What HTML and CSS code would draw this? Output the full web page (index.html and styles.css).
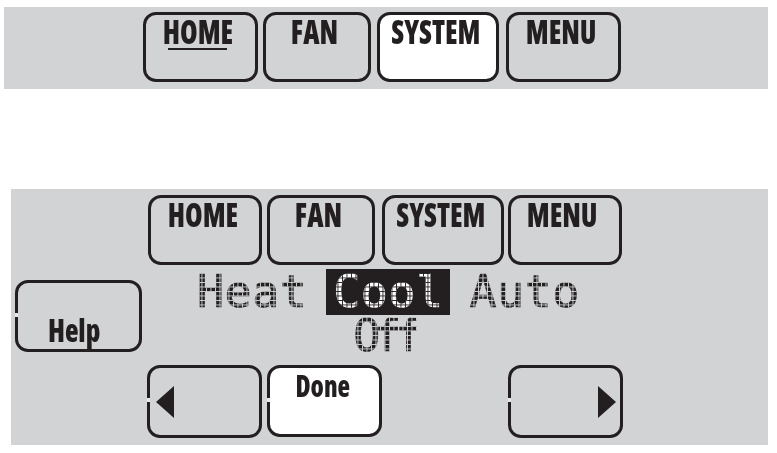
FILE: index.html
```html
<!DOCTYPE html>
<html lang="en">
<head>
    <meta charset="UTF-8">
    <title>Thermostat system mode</title>
    <link rel="stylesheet" href="styles.css">
</head>
<body>
    <div class="screen screen-top">
        <div class="nav">
            <div class="btn btn-home"><span class="label">HOME</span><span class="current-mark"></span></div>
            <div class="btn btn-fan"><span class="label">FAN</span></div>
            <div class="btn btn-system btn-active"><span class="label">SYSTEM</span></div>
            <div class="btn btn-menu"><span class="label">MENU</span></div>
        </div>
    </div>

    <div class="screen screen-bottom">
        <div class="nav">
            <div class="btn btn-home"><span class="label">HOME</span></div>
            <div class="btn btn-fan"><span class="label">FAN</span></div>
            <div class="btn btn-system"><span class="label">SYSTEM</span></div>
            <div class="btn btn-menu"><span class="label">MENU</span></div>
        </div>

        <div class="middle">
            <div class="btn btn-help nick"><span class="label label-small label-help">Help</span></div>
            <div class="lcd">
                <div class="lcd-row">
                    <span class="dots">Heat</span>
                    <span class="lcd-selected"><span class="dots dots-white">Cool</span></span>
                    <span class="dots">Auto</span>
                </div>
                <div class="lcd-row lcd-off">
                    <span class="dots dots-tight">Off</span>
                </div>
            </div>
        </div>

        <div class="actions">
            <div class="btn btn-arrow nick"><span class="arrow arrow-left"></span></div>
            <div class="btn btn-done btn-active nick"><span class="label label-small">Done</span></div>
            <div class="btn btn-arrow btn-next nick"><span class="arrow arrow-right"></span></div>
        </div>
    </div>
</body>
</html>
```

FILE: styles.css
```css
body {
    margin: 0;
    background: #fff;
    font-family: 'Open Sans', 'Liberation Sans', sans-serif;
    color: #231f20;
}
.screen {
    background: #d1d3d4;
}
.screen-top {
    margin: 7px 9px 0 4px;
    height: 82px;
    padding: 5px 0 0 139px;
    box-sizing: border-box;
}
.screen-bottom {
    margin: 100px 9px 0 11px;
    height: 256px;
    padding-top: 6px;
    box-sizing: border-box;
}
.nav {
    display: flex;
    gap: 5px;
}
.screen-bottom .nav {
    margin-left: 137px;
}
.btn {
    position: relative;
    box-sizing: border-box;
    height: 70px;
    border: 3px solid #231f20;
    border-radius: 13px;
    display: flex;
    justify-content: center;
}
.btn-active {
    background: #fff;
}
.btn-home { width: 115px; }
.btn-fan { width: 108px; }
.btn-system { width: 122px; margin-left: 1px; }
.btn-menu { width: 115px; margin-left: 2px; }
.screen-bottom .btn-home { width: 114px; }
.screen-bottom .btn-system { margin-left: 2px; }
.screen-bottom .btn-menu { width: 114px; margin-left: -1px; }
.label {
    display: inline-block;
    font-size: 33px;
    font-weight: 800;
    font-stretch: 75%;
    line-height: 34px;
    margin: 0 5px 0 0;
    height: 34px;
    white-space: nowrap;
    transform: scaleX(0.86);
}
.label-small {
    font-size: 30px;
    margin: 1px 3px 0 0;
}
.label-help {
    font-size: 31px;
    margin: 0 9px 0 0;
    transform: scaleX(0.9);
}
.current-mark {
    position: absolute;
    left: 22px;
    top: 33px;
    width: 59px;
    height: 2px;
    background: #231f20;
}
.middle {
    display: flex;
    height: 100px;
}
.btn-help {
    width: 127px;
    height: 72px;
    margin: 15px 0 0 4px;
    align-items: flex-end;
    padding-bottom: 2px;
}
/* little gap in the left edge of the lower buttons */
.nick::before {
    content: '';
    position: absolute;
    left: -3px;
    top: 30px;
    width: 3px;
    height: 4px;
    background: #e6e7e8;
}
.lcd {
    margin: 4px 0 0 55px;
}
.lcd-row {
    display: flex;
    align-items: center;
    gap: 19px;
    height: 46px;
}
.lcd-off {
    justify-content: center;
    height: 38px;
    margin-top: 2px;
}
.dots {
    font-family: 'DejaVu Sans Mono', monospace;
    font-size: 45px;
    line-height: 38px;
    letter-spacing: 0.5px;
    color: transparent;
    -webkit-text-stroke: 0.7px transparent;
    background-image:
        linear-gradient(#d1d3d4 0 1.1px, transparent 1.1px),
        linear-gradient(90deg, #d1d3d4 0 1.1px, transparent 1.1px),
        linear-gradient(#231f20, #231f20);
    background-size: 4.5px 4.5px, 4.5px 4.5px, auto;
    -webkit-background-clip: text;
    background-clip: text;
}
.dots-tight {
    letter-spacing: -6px;
    margin-right: 7px;
}
.dots-white {
    background-image:
        linear-gradient(#231f20 0 1.1px, transparent 1.1px),
        linear-gradient(90deg, #231f20 0 1.1px, transparent 1.1px),
        linear-gradient(#fff, #fff);
}
.lcd-selected {
    background: #231f20;
    width: 124px;
    height: 46px;
    display: flex;
    justify-content: center;
    align-items: center;
}
.actions {
    display: flex;
    gap: 5px;
    margin-left: 136px;
}
.btn-arrow {
    width: 115px;
    height: 73px;
    align-items: center;
}
.btn-done {
    width: 115px;
    height: 72px;
}
.btn-next {
    margin-left: 121px;
    justify-content: flex-end;
}
.arrow {
    width: 0;
    height: 0;
    border-top: 16px solid transparent;
    border-bottom: 16px solid transparent;
}
.arrow-left {
    border-right: 18px solid #231f20;
    margin-right: auto;
    margin-left: 6px;
}
.arrow-right {
    border-left: 18px solid #231f20;
    margin-right: 4px;
}
```
